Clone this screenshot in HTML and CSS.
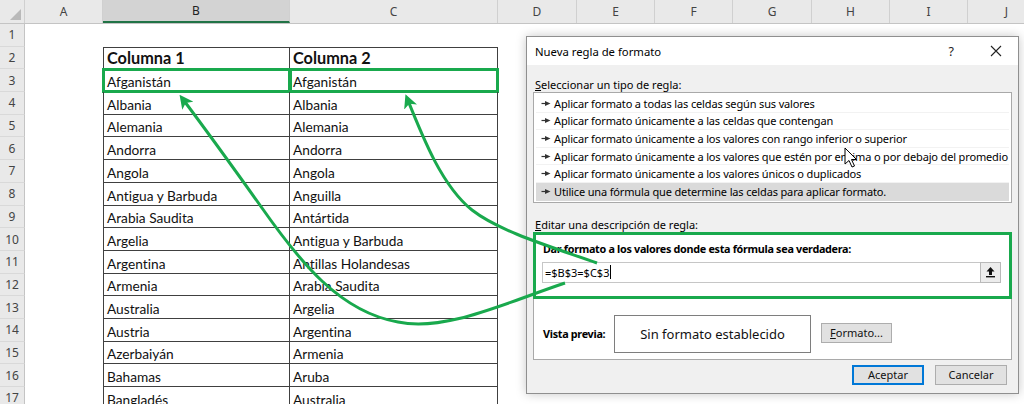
FILE: index.html
```html
<!DOCTYPE html>
<html lang="es">
<head>
<meta charset="utf-8">
<title>Nueva regla de formato</title>
<link rel="stylesheet" href="styles.css">
</head>
<body>
<div class="sheet">
  <div class="hdr">
    <div class="corner"><span class="tri"></span></div>
    <div>A</div><div class="sel">B</div><div>C</div><div>D</div><div>E</div><div>F</div><div>G</div><div>H</div><div>I</div><div>J</div>
  </div>
  <div class="row"><div class="rh">1</div><div class="c"></div><div class="c"></div><div class="c"></div></div>
  <div class="row r2"><div class="rh">2</div><div class="c"></div><div class="c t tl th">Columna 1</div><div class="c t th">Columna 2</div></div>
  <div class="row"><div class="rh">3</div><div class="c"></div><div class="c t tl hl">Afganistán</div><div class="c t hl">Afganistán</div></div>
  <div class="row"><div class="rh">4</div><div class="c"></div><div class="c t tl">Albania</div><div class="c t">Albania</div></div>
  <div class="row"><div class="rh">5</div><div class="c"></div><div class="c t tl">Alemania</div><div class="c t">Alemania</div></div>
  <div class="row"><div class="rh">6</div><div class="c"></div><div class="c t tl">Andorra</div><div class="c t">Andorra</div></div>
  <div class="row"><div class="rh">7</div><div class="c"></div><div class="c t tl">Angola</div><div class="c t">Angola</div></div>
  <div class="row"><div class="rh">8</div><div class="c"></div><div class="c t tl">Antigua y Barbuda</div><div class="c t">Anguilla</div></div>
  <div class="row"><div class="rh">9</div><div class="c"></div><div class="c t tl">Arabia Saudita</div><div class="c t">Antártida</div></div>
  <div class="row"><div class="rh">10</div><div class="c"></div><div class="c t tl">Argelia</div><div class="c t">Antigua y Barbuda</div></div>
  <div class="row"><div class="rh">11</div><div class="c"></div><div class="c t tl">Argentina</div><div class="c t">Antillas Holandesas</div></div>
  <div class="row"><div class="rh">12</div><div class="c"></div><div class="c t tl">Armenia</div><div class="c t">Arabia Saudita</div></div>
  <div class="row"><div class="rh">13</div><div class="c"></div><div class="c t tl">Australia</div><div class="c t">Argelia</div></div>
  <div class="row"><div class="rh">14</div><div class="c"></div><div class="c t tl">Austria</div><div class="c t">Argentina</div></div>
  <div class="row"><div class="rh">15</div><div class="c"></div><div class="c t tl">Azerbaiyán</div><div class="c t">Armenia</div></div>
  <div class="row"><div class="rh">16</div><div class="c"></div><div class="c t tl">Bahamas</div><div class="c t">Aruba</div></div>
  <div class="row"><div class="rh">17</div><div class="c"></div><div class="c t tl">Bangladés</div><div class="c t">Australia</div></div>
</div>

<div class="dialog">
  <div class="titlebar">
    <span class="title">Nueva regla de formato</span>
    <span class="help">?</span>
    <svg class="close" width="12" height="12" viewBox="0 0 12 12"><path d="M1 1 L11 11 M11 1 L1 11" stroke="#222" stroke-width="1.1" fill="none"/></svg>
  </div>
  <div class="body">
    <div class="lbl lbl-top"><u>S</u>eleccionar un tipo de regla:</div>
    <div class="list">
      <div class="item"><svg class="pt" width="10" height="7" viewBox="0 0 10 7"><path d="M0.5 3.5 H5" stroke="#333" stroke-width="1.2" fill="none"/><path d="M4 1 L9.5 3.5 L4 6 Z" fill="#333"/></svg>Aplicar formato a todas las celdas según sus valores</div>
      <div class="item"><svg class="pt" width="10" height="7" viewBox="0 0 10 7"><path d="M0.5 3.5 H5" stroke="#333" stroke-width="1.2" fill="none"/><path d="M4 1 L9.5 3.5 L4 6 Z" fill="#333"/></svg>Aplicar formato únicamente a las celdas que contengan</div>
      <div class="item"><svg class="pt" width="10" height="7" viewBox="0 0 10 7"><path d="M0.5 3.5 H5" stroke="#333" stroke-width="1.2" fill="none"/><path d="M4 1 L9.5 3.5 L4 6 Z" fill="#333"/></svg>Aplicar formato únicamente a los valores con rango inferior o superior</div>
      <div class="item"><svg class="pt" width="10" height="7" viewBox="0 0 10 7"><path d="M0.5 3.5 H5" stroke="#333" stroke-width="1.2" fill="none"/><path d="M4 1 L9.5 3.5 L4 6 Z" fill="#333"/></svg>Aplicar formato únicamente a los valores que estén por encima o por debajo del promedio</div>
      <div class="item"><svg class="pt" width="10" height="7" viewBox="0 0 10 7"><path d="M0.5 3.5 H5" stroke="#333" stroke-width="1.2" fill="none"/><path d="M4 1 L9.5 3.5 L4 6 Z" fill="#333"/></svg>Aplicar formato únicamente a los valores únicos o duplicados</div>
      <div class="item selected"><svg class="pt" width="10" height="7" viewBox="0 0 10 7"><path d="M0.5 3.5 H5" stroke="#333" stroke-width="1.2" fill="none"/><path d="M4 1 L9.5 3.5 L4 6 Z" fill="#333"/></svg>Utilice una fórmula que determine las celdas para aplicar formato.</div>
    </div>
    <div class="lbl lbl-mid"><u>E</u>ditar una descripción de regla:</div>
    <div class="panel">
      <div class="rulebox">
        <div class="boldlbl">Dar formato a los valores donde esta fórmula sea verdadera:</div>
        <div class="input">
          <span class="formula">=$B$3=$C$3</span><span class="caret"></span>
          <span class="refbtn"><svg width="11" height="12" viewBox="0 0 11 12"><path d="M5.5 1 L1.5 5.5 H4 V9 H7 V5.5 H9.5 Z" fill="#111"/><rect x="1" y="10" width="9" height="1.4" fill="#111"/></svg></span>
        </div>
      </div>
      <div class="preview-row">
        <div class="boldlbl plbl">Vista previa:</div>
        <div class="preview">Sin formato establecido</div>
        <div class="btn fmt"><u>F</u>ormato...</div>
      </div>
    </div>
    <div class="footer">
      <div class="btn primary">Aceptar</div>
      <div class="btn">Cancelar</div>
    </div>
  </div>
</div>

<svg class="overlay" width="1024" height="404" viewBox="0 0 1024 404">
  <defs>
    <marker id="ah" viewBox="0 0 10 10" refX="7" refY="5" markerWidth="4.6" markerHeight="4.6" orient="auto">
      <path d="M0,0 L10,5 L0,10 L2.5,5 Z" fill="#19a94d"/>
    </marker>
  </defs>
  <path d="M597,263 C555,248 500,232 472,210 C442,186 423,138 407,98" stroke="#19a94d" stroke-width="3" fill="none" marker-end="url(#ah)"/>
  <path d="M565,283 C505,303 445,332 398,322 C340,312 300,262 262,208 C230,163 203,126 182,98" stroke="#19a94d" stroke-width="3" fill="none" marker-end="url(#ah)"/>
  <path d="M845,148 L845,164 L849,160.5 L852,167 L854.5,166 L851.5,159.5 L856.5,159.5 Z" fill="#fff" stroke="#000" stroke-width="1" stroke-linejoin="round"/>
</svg>
</body>
</html>
```
FILE: styles.css
```css
* { box-sizing: border-box; }
html, body { margin: 0; padding: 0; }
body {
  width: 1024px;
  height: 404px;
  overflow: hidden;
  position: relative;
  background: #fff;
  font-family: "Noto Sans", "DejaVu Sans", sans-serif;
}

/* ---------- spreadsheet ---------- */
.sheet { width: 1024px; }
.hdr {
  display: grid;
  grid-template-columns: 25px 78px 187px 208px 79px 78px 78px 79px 78px 78px 78px;
  height: 24px;
  background: #e9e9e9;
  border-bottom: 1px solid #c4c4c4;
  overflow: hidden;
}
.hdr > div {
  display: flex;
  align-items: center;
  justify-content: center;
  border-right: 1px solid #d0d0d0;
  font-size: 12px;
  color: #444;
}
.hdr .corner { position: relative; }
.hdr .corner .tri {
  position: absolute;
  right: 3px;
  bottom: 3px;
  width: 0; height: 0;
  border-left: 11px solid transparent;
  border-bottom: 11px solid #b9b9b9;
}
.hdr .sel {
  background: #d3d3d3;
  border-bottom: 2px solid #217346;
  color: #222;
}
.row {
  display: grid;
  grid-template-columns: 25px 78px 187px 208px 1fr;
  height: 22.7px;
}
.rh {
  background: #e9e9e9;
  border-right: 1px solid #c4c4c4;
  border-bottom: 1px solid #d9d9d9;
  display: flex;
  align-items: center;
  justify-content: center;
  font-size: 12px;
  color: #444;
}
.c {
  display: flex;
  align-items: flex-end;
  padding: 0 3px 0 3px;
  font-family: Lato, "Open Sans", sans-serif;
  font-size: 13.7px;
  line-height: 19px;
  font-variant-ligatures: none;
  color: #111;
  white-space: nowrap;
}
.t {
  border-right: 1px solid #404040;
  border-bottom: 1px solid #404040;
}
.tl { border-left: 1px solid #404040; }
.r2 .t { border-top: 1px solid #404040; }
.th { font-weight: 700; font-size: 16.3px; line-height: 20px; }
.hl { outline: 3px solid #19a94d; outline-offset: -2px; }

/* ---------- dialog ---------- */
.dialog {
  position: absolute;
  left: 526px;
  top: 36px;
  width: 493px;
  height: 358px;
  background: #f0f0f0;
  border: 1px solid #8f8f8f;
  box-shadow: 0 0 10px rgba(0,0,0,0.22);
  font-size: 11px;
  color: #000;
  display: flex;
  flex-direction: column;
  z-index: 5;
}
.titlebar {
  height: 28px;
  background: #fff;
  display: flex;
  align-items: center;
  padding: 0 16px 0 8px;
}
.title { font-size: 11.3px; flex: 1; }
.help { font-size: 12.5px; margin-right: 36px; color: #222; }
.close { display: block; }
.body {
  flex: 1;
  display: flex;
  flex-direction: column;
  padding: 0 6px 7px 6px;
}
.lbl { line-height: 15px; padding-left: 2px; }
.lbl-top { margin-top: 12px; }
.lbl-mid { margin-top: 15px; line-height: 14px; }
.list {
  background: #fff;
  border: 1px solid #a9a9a9;
  padding: 2px 2px 1px 2px;
}
.item {
  height: 17.6px;
  display: flex;
  align-items: center;
  padding-left: 5px;
  border-bottom: 1px solid #f2f2f2;
  white-space: nowrap;
  letter-spacing: -0.15px;
}
.item.selected { background: #dadada; border-bottom-color: #dadada; }
.pt { margin-right: 3px; flex: none; }

.panel {
  background: #fff;
  border: 1px solid #a9a9a9;
  display: flex;
  flex-direction: column;
}
.rulebox {
  border: 3px solid #19a94d;
  margin: -1px -1px 0 -1px;
  padding: 6px 8px 13px 6px;
}
.boldlbl {
  font-weight: 700;
  font-size: 10.8px;
  letter-spacing: -0.3px;
  line-height: 16px;
  padding-left: 1px;
}
.input {
  margin-top: 5px;
  height: 21px;
  border: 1px solid #c6c6c6;
  background: #fff;
  display: flex;
  align-items: center;
  padding-left: 2px;
  font-size: 11px;
}
.caret { width: 1px; height: 14px; background: #000; margin-left: 1px; }
.refbtn {
  margin-left: auto;
  width: 21px;
  height: 21px;
  margin-right: -1px;
  border: 1px solid #b9b9b9;
  background: #ececec;
  display: flex;
  align-items: center;
  justify-content: center;
}
.preview-row {
  display: flex;
  align-items: center;
  padding: 16px 0 6px 8px;
}
.plbl { width: 72px; }
.preview {
  width: 197px;
  height: 38px;
  border: 1px solid #7e7e7e;
  display: flex;
  align-items: center;
  justify-content: center;
  font-size: 13px;
  color: #111;
}
.btn {
  width: 71px;
  height: 20px;
  background: #e1e1e1;
  border: 1px solid #adadad;
  display: flex;
  align-items: center;
  justify-content: center;
  font-size: 11px;
  color: #111;
}
.fmt { margin-left: 10px; margin-top: -2px; }
.footer {
  margin-top: 5px;
  display: flex;
  justify-content: flex-end;
  gap: 11px;
  padding-right: 5px;
}
.footer .btn { width: 72px; }
.btn.primary { border: 2px solid #0078d7; }

/* ---------- annotations ---------- */
.overlay {
  position: absolute;
  left: 0;
  top: 0;
  z-index: 10;
  pointer-events: none;
}
```
